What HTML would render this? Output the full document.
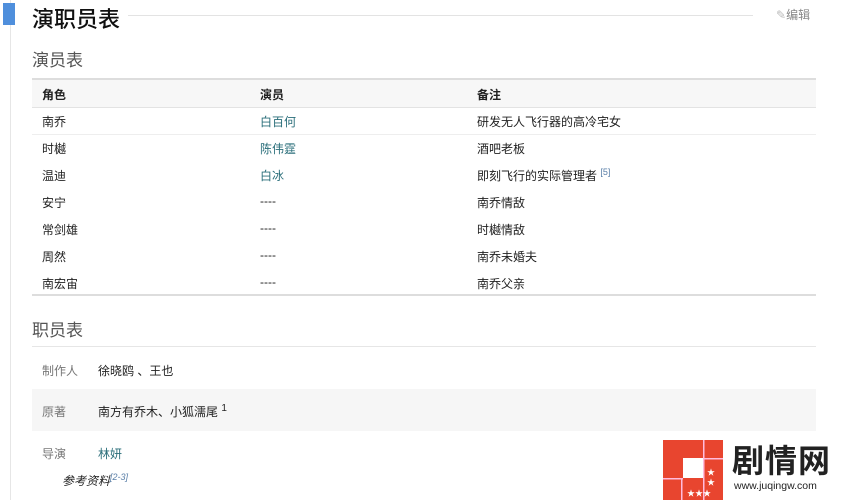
<!DOCTYPE html>
<html><head><meta charset="utf-8">
<style>
body{margin:0;width:842px;height:500px;background:#fff;font-family:"Liberation Sans","Noto Sans CJK SC",sans-serif;color:#333;position:relative;overflow:hidden}
.a{position:absolute;white-space:nowrap}
.t{font-size:12px;color:#222}
.l{color:#136ec2;color:#2a6e7a}
</style></head><body>
<div class="a" style="left:10px;top:0;width:1px;height:500px;background:#e6e6e6"></div>
<div class="a" style="left:3px;top:3px;width:12px;height:22px;background:#4f8fdc"></div>
<div class="a" style="left:32px;top:2px;font-size:22px;color:#111;font-weight:500">演职员表</div>
<div class="a" style="left:128px;top:15px;width:625px;height:1px;background:#e3e3e3"></div>
<div class="a" style="left:776px;top:6px;font-size:12px;color:#888"><span style="color:#bbb">✎</span>编辑</div>
<div class="a" style="left:32px;top:46px;font-size:17px;color:#555">演员表</div>
<div class="a" style="left:32px;top:78px;width:784px;height:2px;background:#ddd"></div>
<div class="a" style="left:32px;top:80px;width:784px;height:27px;background:#f7f7f7;border-bottom:1px solid #e3e3e3"></div>
<div class="a t" style="left:42px;top:86px;font-weight:bold">角色</div>
<div class="a t" style="left:260px;top:86px;font-weight:bold">演员</div>
<div class="a t" style="left:477px;top:86px;font-weight:bold">备注</div>

<div class="a t" style="left:42px;top:113px">南乔</div><div class="a t l" style="left:260px;top:113px">白百何</div><div class="a t" style="left:477px;top:113px">研发无人飞行器的高冷宅女</div>
<div class="a" style="left:32px;top:134px;width:784px;height:1px;background:#eee"></div>
<div class="a t" style="left:42px;top:140px">时樾</div><div class="a t l" style="left:260px;top:140px">陈伟霆</div><div class="a t" style="left:477px;top:140px">酒吧老板</div>
<div class="a t" style="left:42px;top:167px">温迪</div><div class="a t l" style="left:260px;top:167px">白冰</div><div class="a t" style="left:477px;top:167px">即刻飞行的实际管理者 <sup style="font-size:9px;color:#5a7fa8">[5]</sup></div>
<div class="a t" style="left:42px;top:194px">安宁</div><div class="a t" style="left:260px;top:194px">----</div><div class="a t" style="left:477px;top:194px">南乔情敌</div>
<div class="a t" style="left:42px;top:221px">常剑雄</div><div class="a t" style="left:260px;top:221px">----</div><div class="a t" style="left:477px;top:221px">时樾情敌</div>
<div class="a t" style="left:42px;top:248px">周然</div><div class="a t" style="left:260px;top:248px">----</div><div class="a t" style="left:477px;top:248px">南乔未婚夫</div>
<div class="a t" style="left:42px;top:275px">南宏宙</div><div class="a t" style="left:260px;top:275px">----</div><div class="a t" style="left:477px;top:275px">南乔父亲</div>
<div class="a" style="left:32px;top:294px;width:784px;height:2px;background:#ddd"></div>

<div class="a" style="left:32px;top:316px;font-size:17px;color:#555">职员表</div>
<div class="a" style="left:32px;top:346px;width:784px;height:1px;background:#e6e6e6"></div>
<div class="a t" style="left:42px;top:362px;color:#777">制作人</div><div class="a t" style="left:98px;top:362px">徐晓鸥 、王也</div>
<div class="a" style="left:32px;top:389px;width:784px;height:42px;background:#f6f6f6"></div>
<div class="a t" style="left:42px;top:403px;color:#777">原著</div><div class="a t" style="left:98px;top:403px">南方有乔木、小狐濡尾 <sup style="font-size:10px">1</sup></div>
<div class="a t" style="left:42px;top:445px;color:#777">导演</div><div class="a t l" style="left:98px;top:445px">林妍</div>
<div class="a" style="left:62px;top:472px;font-size:12px;font-style:italic;color:#222">参考资料<sup style="font-size:9px;color:#5a7fa8">[2-3]</sup></div>

<svg class="a" style="left:663px;top:440px" width="60" height="60">
<rect width="60" height="60" fill="#e8452f"/>
<rect x="20" y="18" width="20" height="20" fill="#fff"/>
<rect x="40" y="0" width="1.5" height="60" fill="#fbd"/>
<rect x="0" y="38" width="20" height="1.5" fill="#fbd"/>
<rect x="41" y="18" width="19" height="1.5" fill="#fbd"/>
<rect x="18" y="38" width="1.5" height="22" fill="#fbd"/>
<text x="44" y="35" font-size="8" fill="#fff">★</text><text x="44" y="45" font-size="8" fill="#fff">★</text>
<text x="24" y="56" font-size="8" fill="#fff">★★★</text>
</svg>
<div class="a" style="left:732px;top:436px;font-size:32px;font-weight:bold;color:#222;letter-spacing:1px">剧情网</div>
<div class="a" style="left:734px;top:480px;font-size:10.5px;color:#222">www.juqingw.com</div>
</body></html>
